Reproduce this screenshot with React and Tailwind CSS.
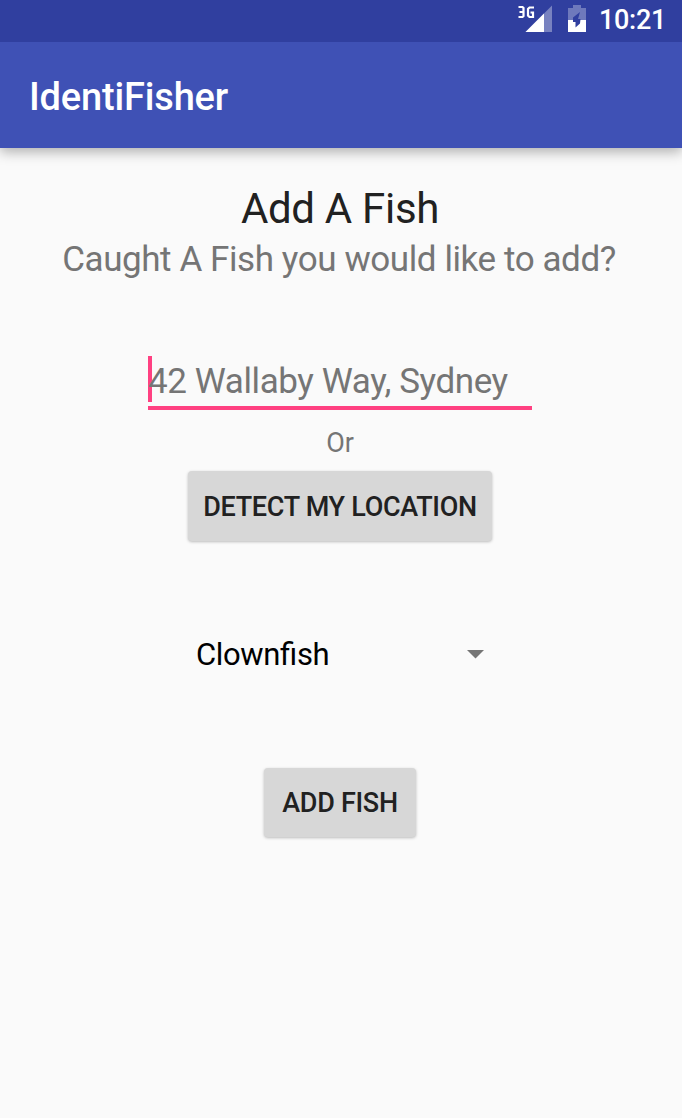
export default function App() {
  return (
    <div className="flex h-[1118px] w-[682px] flex-col overflow-hidden bg-[#fafafa] font-['Roboto',sans-serif]">
      <div className="relative z-20 flex h-[42px] shrink-0 items-start justify-end bg-[#303f9f] pr-[17px] text-white">
        <svg width="36" height="36" viewBox="516 0 36 36" className="mr-4">
          <path d="M552 5.500V32H525.500Z" fill="#fff" fillOpacity=".35" />
          <path d="M544 13.500V32H525.500Z" fill="#fff" />
          <path d="M518.500 7h4l1 1v8l-1 1h-4M519.500 12h4M534 7.500h-4.500l-1.500 1.500v6.500l1.500 1.500h3.500v-4.500h-2.500" fill="none" stroke="#fff" strokeWidth="2.2" />
        </svg>
        <svg width="18" height="36" viewBox="568 0 18 36" className="mr-[13px]">
          <path d="M573 5h8v3h5v12h-18V8h5z" fill="#fff" fillOpacity=".3" />
          <path d="M568 20h18v12h-18z" fill="#fff" />
          <path d="M580 12l-7 5.500v4.500h2.500v5.500l4.500-4 .5-4.500h-2.500z" fill="#303f9f" />
        </svg>
        <span className="w-[66px] pt-[2px] text-[27px] leading-9 font-medium tracking-[-0.3px] whitespace-nowrap">10:21</span>
      </div>
      <header className="z-10 flex h-[106px] shrink-0 items-center bg-[#3f51b5] pt-1 pl-[29px] shadow-[0_4px_12px_rgba(0,0,0,0.3)]">
        <h1 className="text-[38px] font-medium tracking-[-0.17px] text-white">IdentiFisher</h1>
      </header>
      <main className="flex flex-col items-center pr-[2px]">
        <h2 className="mt-[36px] text-[42px] leading-[50px] tracking-[-0.3px] text-[#212121]">Add A Fish</h2>
        <p className="mt-[4px] pr-[2px] text-[35px] leading-[44px] tracking-[-0.42px] whitespace-nowrap text-[#757575]">Caught A Fish you would like to add?</p>
        <div className="mt-[74px] flex h-[54px] w-[384px] flex-col border-b-4 border-[#ff4081]">
          <div className="h-[46px] border-l-4 border-[#ff4081]">
            <span className="-ml-1 block text-[35px] leading-[52px] tracking-[-0.42px] whitespace-nowrap text-[#757575]">42 Wallaby Way, Sydney</span>
          </div>
        </div>
        <p className="mt-[17px] text-[27px] leading-8 tracking-[-0.2px] text-[#757575]">Or</p>
        <button className="mt-[12px] h-[70px] w-[304px] rounded-[4px] bg-[#d7d7d7] pt-[2px] text-[27px] font-medium tracking-[-0.3px] whitespace-nowrap text-[#212121] shadow-[0_1px_3px_rgba(0,0,0,0.25)]">DETECT MY LOCATION</button>
        <div className="mt-[92px] flex h-[42px] w-[288px] items-center justify-between">
          <span className="pt-[2px] text-[31px] tracking-[-0.35px] text-black [font-feature-settings:'liga'_1]">Clownfish</span>
          <svg width="17" height="9" viewBox="0 0 17 9"><path d="M0 0h17l-8.500 8.500z" fill="#757575" /></svg>
        </div>
        <button className="mt-[93px] h-[69px] w-[152px] rounded-[4px] bg-[#d7d7d7] pt-[2px] text-[27px] font-medium tracking-[-0.3px] whitespace-nowrap text-[#212121] shadow-[0_1px_3px_rgba(0,0,0,0.25)]">ADD FISH</button>
      </main>
    </div>
  );
}
